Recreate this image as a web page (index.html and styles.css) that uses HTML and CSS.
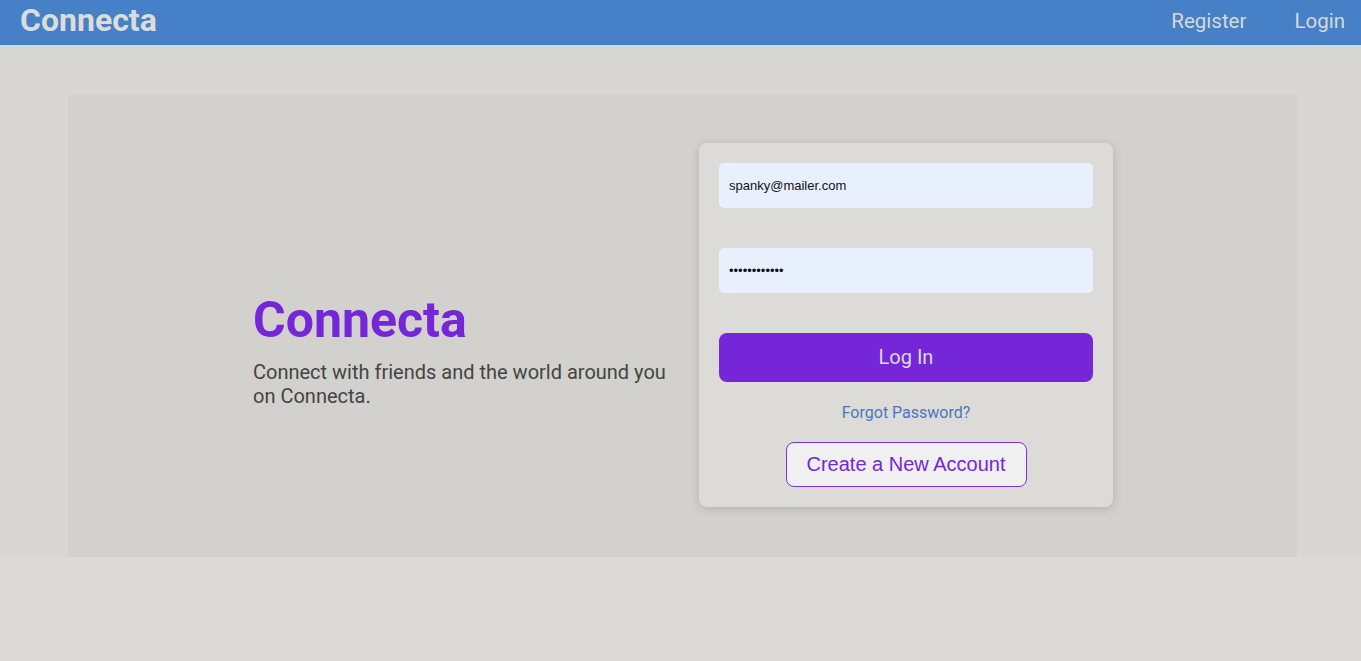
FILE: index.html
```html
<!DOCTYPE html>
<html lang="en">
<head>
<meta charset="utf-8">
<title>Connecta</title>
<link rel="stylesheet" href="styles.css">
</head>
<body>
<header class="topbar">
  <div class="brand">Connecta</div>
  <nav class="nav">
    <a class="nav-link" href="#">Register</a>
    <a class="nav-link" href="#">Login</a>
  </nav>
</header>
<main class="section">
  <div class="panel">
    <div class="intro">
      <h1 class="intro-title">Connecta</h1>
      <p class="intro-text">Connect with friends and the world around you on Connecta.</p>
    </div>
    <form class="card">
      <input class="field" type="email" value="spanky@mailer.com">
      <input class="field" type="password" value="secretpasswd">
      <button class="btn-login" type="button">Log In</button>
      <a class="forgot" href="#">Forgot Password?</a>
      <button class="btn-create" type="button">Create a New Account</button>
    </form>
  </div>
</main>
</body>
</html>
```
FILE: styles.css
```css
* { box-sizing: border-box; }
html, body { margin: 0; padding: 0; }
body {
  background: #dbdad6;
  font-family: Roboto, "Liberation Sans", sans-serif;
  height: 661px;
}
.topbar {
  height: 45px;
  background: #4680c6;
  display: flex;
  align-items: center;
  justify-content: space-between;
  padding: 0 16px 0 20px;
}
.brand {
  color: #dcdcdc;
  font-weight: 700;
  font-size: 32px;
  line-height: 45px;
  position: relative;
  top: -2px;
}
.nav { display: flex; gap: 48px; }
.nav-link {
  color: #d8d8d8;
  text-decoration: none;
  font-size: 20.5px;
  position: relative;
  top: -2px;
}
.section {
  background: #d8d7d3;
  padding: 49px 64px 0 68px;
}
.panel {
  background: #d2d1cd;
  border-radius: 4px 4px 0 0;
  height: 463px;
  padding: 0 0 2px 1px;
  display: flex;
  align-items: center;
  justify-content: center;
  gap: 31px;
}
.intro { width: 415px; padding-top: 50px; }
.intro-title {
  margin: 0;
  color: #7526d9;
  font-size: 50px;
  font-weight: 700;
  line-height: 56px;
}
.intro-text {
  margin: 12px 0 0;
  color: #444;
  font-size: 20px;
  line-height: 24px;
}
.card {
  width: 414px;
  background: #dcdbd7;
  border-radius: 8px;
  box-shadow: 0 2px 10px rgba(0,0,0,0.15);
  padding: 20px;
  display: flex;
  flex-direction: column;
  align-items: center;
}
.field {
  width: 100%;
  height: 45px;
  border: none;
  border-radius: 5px;
  background: #e8f0fe;
  padding: 0 10px;
  font-family: "Liberation Sans", Arial, sans-serif;
  font-size: 13px;
  color: #111;
  margin-bottom: 40px;
}
.btn-login {
  width: 100%;
  height: 49px;
  border: none;
  border-radius: 8px;
  background: #7526d9;
  color: #dcdcdc;
  font-family: Roboto, sans-serif;
  font-size: 20px;
}
.forgot {
  margin-top: 21px;
  margin-bottom: -1px;
  color: #4a76c0;
  text-decoration: none;
  font-size: 16px;
  line-height: 20px;
}
.btn-create {
  margin-top: 20px;
  width: 241px;
  height: 45px;
  background: #f0f0f0;
  border: 1px solid #7a33dc;
  border-radius: 8px;
  color: #7526d9;
  font-family: "Liberation Sans", Arial, sans-serif;
  font-size: 20px;
}
```
